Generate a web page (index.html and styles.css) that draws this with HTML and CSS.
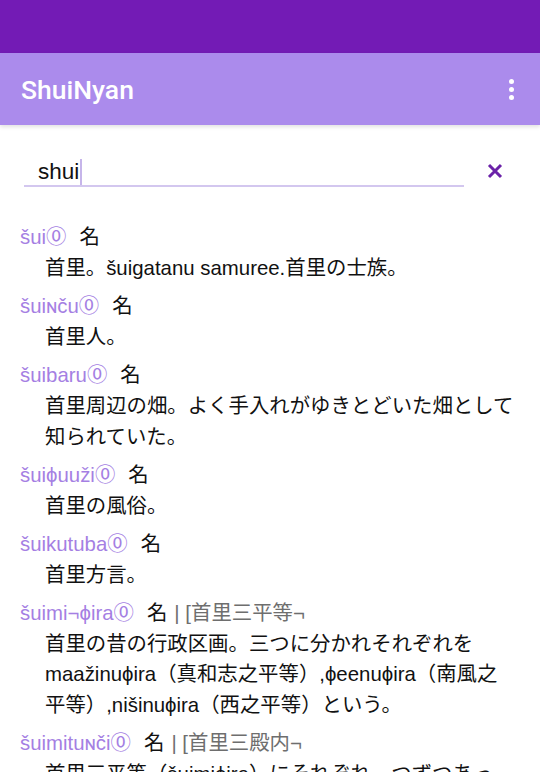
FILE: index.html
```html
<!DOCTYPE html>
<html lang="ja">
<head>
<meta charset="utf-8">
<title>ShuiNyan</title>
<link rel="stylesheet" href="styles.css">
</head>
<body>
<div class="status-bar"></div>
<header class="app-bar">
  <h1 class="title">ShuiNyan</h1>
  <div class="menu"><span></span><span></span><span></span></div>
</header>
<section class="search">
  <div class="field"><span class="query">shui</span><span class="caret"></span></div>
  <svg class="clear" width="16" height="16" viewBox="0 0 16 16"><path d="M2 2L14 14M14 2L2 14" stroke="#6b22a8" stroke-width="3" stroke-linecap="butt"/></svg>
</section>
<main class="list">
  <div class="entry">
    <div class="head"><span class="word">šui⓪</span><span class="pos">名</span></div>
    <div class="def">首里。šuigatanu samuree.首里の士族。</div>
  </div>
  <div class="entry">
    <div class="head"><span class="word">šuiɴču⓪</span><span class="pos">名</span></div>
    <div class="def">首里人。</div>
  </div>
  <div class="entry">
    <div class="head"><span class="word">šuibaru⓪</span><span class="pos">名</span></div>
    <div class="def">首里周辺の畑。よく手入れがゆきとどいた畑として知られていた。</div>
  </div>
  <div class="entry">
    <div class="head"><span class="word">šuiϕuuži⓪</span><span class="pos">名</span></div>
    <div class="def">首里の風俗。</div>
  </div>
  <div class="entry">
    <div class="head"><span class="word">šuikutuba⓪</span><span class="pos">名</span></div>
    <div class="def">首里方言。</div>
  </div>
  <div class="entry">
    <div class="head"><span class="word">šuimi¬ϕira⓪</span><span class="pos">名</span><span class="note">| [首里三平等¬</span></div>
    <div class="def">首里の昔の行政区画。三つに分かれそれぞれをmaažinuϕira（真和志之平等）,ϕeenuϕira（南風之平等）,nišinuϕira（西之平等）という。</div>
  </div>
  <div class="entry">
    <div class="head"><span class="word">šuimituɴči⓪</span><span class="pos">名</span><span class="note">| [首里三殿内¬</span></div>
    <div class="def">首里三平等（šuimiϕira）にそれぞれ一つずつあった。</div>
  </div>
</main>
</body>
</html>
```
FILE: styles.css
```css
* { box-sizing: border-box; }
html, body {
  margin: 0;
  padding: 0;
  background: #ffffff;
  overflow: hidden;
}
body {
  width: 540px;
  height: 772px;
  font-family: "Liberation Sans", "Noto Sans CJK JP", sans-serif;
  color: #1a1a1a;
}
.status-bar {
  height: 53px;
  background: #731bb5;
}
.app-bar {
  height: 72px;
  background: #ab8bec;
  display: flex;
  align-items: center;
  justify-content: space-between;
  padding: 0 26px 0 21px;
  box-shadow: 0 2px 4px rgba(0,0,0,0.12);
  position: relative;
}
.title {
  margin: 0;
  font-family: Roboto, sans-serif;
  font-size: 26.5px;
  font-weight: 500;
  color: #ffffff;
  margin-top: 1px;
}
.menu {
  display: flex;
  flex-direction: column;
  gap: 3px;
}
.menu span {
  width: 5px;
  height: 5px;
  border-radius: 50%;
  background: #ffffff;
}
.search {
  display: flex;
  align-items: center;
  padding: 28px 0 0 24px;
}
.field {
  width: 440px;
  height: 34px;
  border-bottom: 2px solid #d3c7ef;
  display: flex;
  align-items: center;
  padding: 5px 0 0 14px;
}
.query {
  font-size: 22.5px;
  color: #111;
}
.caret {
  width: 2px;
  height: 26px;
  background: #c6b5ea;
  margin-left: 1px;
}
.clear {
  margin-left: 23px;
  margin-top: 2px;
}
.list {
  padding: 35px 25px 0 20px;
  display: flex;
  flex-direction: column;
  gap: 7.5px;
}
.head {
  line-height: 31px;
  font-size: 20.4px;
  display: flex;
  align-items: baseline;
}
.word {
  color: #a57fe3;
}
.pos {
  margin-left: 13px;
  color: #111;
}
.note {
  margin-left: 7px;
  color: #6e6e6e;
}
.def {
  padding-left: 25px;
  font-size: 20.4px;
  line-height: 30.5px;
  color: #111;
}
```
